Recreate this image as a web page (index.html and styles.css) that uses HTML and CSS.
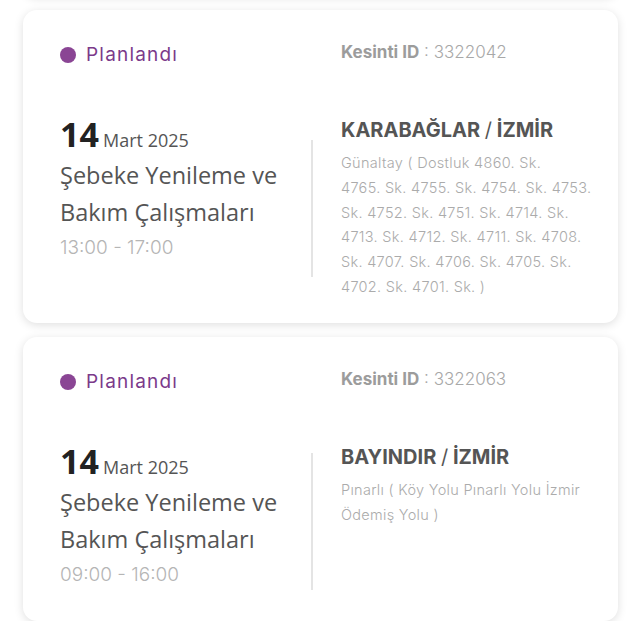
FILE: index.html
```html
<!DOCTYPE html>
<html lang="tr">
<head>
<meta charset="utf-8">
<title>Kesintiler</title>
<link rel="stylesheet" href="styles.css">
</head>
<body>
<div class="list">
  <div class="card prev"></div>

  <div class="card">
    <div class="status"><span class="dot"></span>Planlandı</div>
    <div class="kid"><b>Kesinti ID</b> : 3322042</div>
    <div class="left">
      <div class="date"><span class="day">14</span> <span class="month">Mart 2025</span></div>
      <div class="title">Şebeke Yenileme ve Bakım Çalışmaları</div>
      <div class="time">13:00 - 17:00</div>
    </div>
    <div class="divider"></div>
    <div class="right">
      <div class="place">KARABAĞLAR <span class="slash">/</span> İZMİR</div>
      <div class="addr">Günaltay ( Dostluk 4860. Sk.<br>4765. Sk. 4755. Sk. 4754. Sk. 4753.<br>Sk. 4752. Sk. 4751. Sk. 4714. Sk.<br>4713. Sk. 4712. Sk. 4711. Sk. 4708.<br>Sk. 4707. Sk. 4706. Sk. 4705. Sk.<br>4702. Sk. 4701. Sk. )</div>
    </div>
  </div>

  <div class="card">
    <div class="status"><span class="dot"></span>Planlandı</div>
    <div class="kid"><b>Kesinti ID</b> : 3322063</div>
    <div class="left">
      <div class="date"><span class="day">14</span> <span class="month">Mart 2025</span></div>
      <div class="title">Şebeke Yenileme ve Bakım Çalışmaları</div>
      <div class="time">09:00 - 16:00</div>
    </div>
    <div class="divider"></div>
    <div class="right">
      <div class="place">BAYINDIR <span class="slash">/</span> İZMİR</div>
      <div class="addr">Pınarlı ( Köy Yolu Pınarlı Yolu İzmir<br>Ödemiş Yolu )</div>
    </div>
  </div>
</div>
</body>
</html>
```

FILE: styles.css
```css
* { box-sizing: border-box; }
html, body { margin: 0; background: #fff; }
body { font-family: "Inter", "Liberation Sans", sans-serif; }

.list {
  display: flex;
  flex-direction: column;
  gap: 14px;
  padding: 10px 22px 0 23px;
}

.card {
  background: #fff;
  border-radius: 14px;
  box-shadow: 0 2px 10px rgba(0, 0, 0, 0.13);
  padding: 30px 22px 23px 37px;
  display: grid;
  grid-template-columns: 251px 30px 1fr;
  row-gap: 51px;
}

.card.prev {
  height: 100px;
  margin-top: -114px;
  padding: 0;
}

.status {
  grid-column: 1;
  display: flex;
  align-items: center;
  gap: 10px;
  font-size: 19px;
  letter-spacing: 1.2px;
  line-height: 24px;
  color: #7b3a8a;
  padding-top: 3px;
}
.dot {
  flex: none;
  width: 16px;
  height: 16px;
  border-radius: 50%;
  background: #8a4594;
}

.kid {
  grid-column: 3;
  font-size: 17px;
  line-height: 24px;
  color: #a8a8a8;
  font-weight: 300;
}
.kid b { font-weight: 700; color: #9c9c9c; }

.left { grid-column: 1; padding-bottom: 6px; }
.date { line-height: 32px; font-family: "Open Sans", sans-serif; }
.day { font-size: 34px; font-weight: 700; color: #222; }
.month { font-size: 18px; color: #555; }
.title {
  font-family: "Open Sans", sans-serif;
  font-size: 23.5px;
  line-height: 37px;
  color: #555;
}
.time {
  font-size: 19px;
  line-height: 34px;
  color: #b5b5b5;
  font-weight: 300;
}

.divider {
  grid-column: 2;
  width: 2px;
  height: 137px;
  align-self: center;
  background: #e4e4e4;
}

.right { grid-column: 3; }
.place {
  font-size: 20px;
  line-height: 24px;
  font-weight: 700;
  color: #555;
}
.slash { font-weight: 400; }
.addr {
  margin-top: 9px;
  font-size: 14.5px;
  letter-spacing: 0.3px;
  line-height: 24.8px;
  color: #ababab;
  font-weight: 300;
}
```
